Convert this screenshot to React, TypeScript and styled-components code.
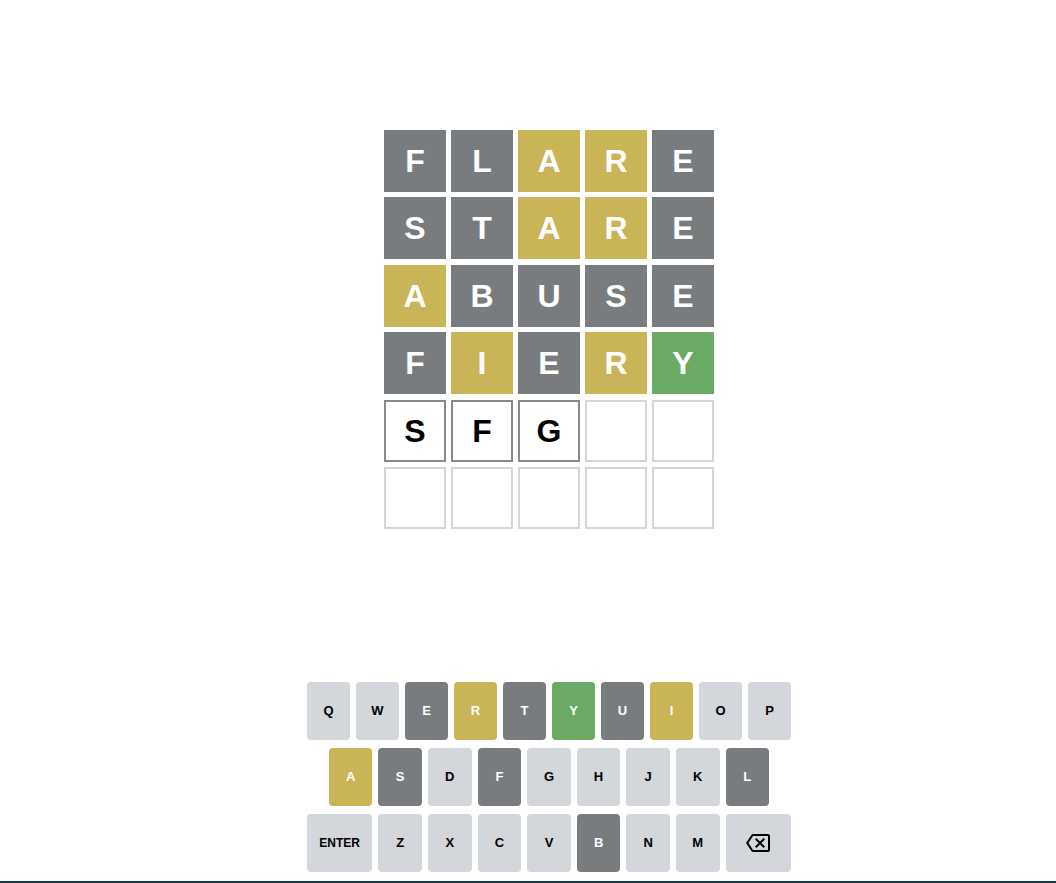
import React from "react";
import styled, { createGlobalStyle } from "styled-components";

const Global = createGlobalStyle`
  html, body { margin: 0; padding: 0; background: #ffffff; }
  body { font-family: "Liberation Sans", Arial, sans-serif; overflow: hidden; }
`;

type State = "absent" | "present" | "correct" | "filled" | "empty" | "unused";

const tileBg: Record<State, string> = {
  absent: "#787c7e",
  present: "#c9b458",
  correct: "#6aaa64",
  filled: "#ffffff",
  empty: "#ffffff",
  unused: "#d3d6da",
};

const Page = styled.div`
  box-sizing: border-box;
  height: 883px;
  padding-left: 42px;
  border-bottom: 2px solid #1f3440;
  display: flex;
  flex-direction: column;
  align-items: center;
`;

const Board = styled.div`
  margin-top: 130px;
  display: grid;
  grid-template-columns: repeat(5, 62px);
  grid-template-rows: repeat(6, 62px);
  column-gap: 5px;
  row-gap: 5.4px;
`;

const Tile = styled.div<{ $s: State }>`
  box-sizing: border-box;
  width: 62px;
  height: 62px;
  display: flex;
  align-items: center;
  justify-content: center;
  font-family: "Liberation Sans", Arial, sans-serif;
  font-weight: 700;
  font-size: 32px;
  line-height: 1;
  text-transform: uppercase;
  background: ${(p) => tileBg[p.$s]};
  color: ${(p) => (p.$s === "filled" || p.$s === "empty" ? "#000000" : "#ffffff")};
  border: ${(p) =>
    p.$s === "filled"
      ? "2px solid #878a8c"
      : p.$s === "empty"
      ? "2px solid #d3d6da"
      : "none"};
`;

const Keyboard = styled.div`
  margin-top: 153px;
  width: 490px;
  display: flex;
  flex-direction: column;
  gap: 8px;
`;

const KeyRow = styled.div`
  display: flex;
  width: 100%;
`;

const Spacer = styled.div`
  flex: 0.5;
`;

const Key = styled.button<{ $s: State; $wide?: boolean }>`
  flex: ${(p) => (p.$wide ? 1.5 : 1)};
  min-width: 0;
  height: 58px;
  margin: 0 3px;
  padding: 0;
  border: none;
  border-radius: 4px;
  display: flex;
  align-items: center;
  justify-content: center;
  font-family: "Liberation Sans", Arial, sans-serif;
  font-weight: 700;
  font-size: ${(p) => (p.$wide ? "12px" : "13px")};
  background: ${(p) => tileBg[p.$s]};
  color: ${(p) => (p.$s === "unused" ? "#000000" : "#ffffff")};
  cursor: pointer;
`;

const guesses: { letters: string; states: State[] }[] = [
  { letters: "FLARE", states: ["absent", "absent", "present", "present", "absent"] },
  { letters: "STARE", states: ["absent", "absent", "present", "present", "absent"] },
  { letters: "ABUSE", states: ["present", "absent", "absent", "absent", "absent"] },
  { letters: "FIERY", states: ["absent", "present", "absent", "present", "correct"] },
  { letters: "SFG  ", states: ["filled", "filled", "filled", "empty", "empty"] },
  { letters: "     ", states: ["empty", "empty", "empty", "empty", "empty"] },
];

const keyState: Record<string, State> = {
  E: "absent", R: "present", T: "absent", Y: "correct", U: "absent", I: "present",
  A: "present", S: "absent", F: "absent", L: "absent", B: "absent",
};

const ks = (k: string): State => keyState[k] ?? "unused";

const Backspace = () => (
  <svg width="24" height="24" viewBox="0 0 24 24" aria-hidden="true">
    <path
      fill="#000000"
      d="M22 3H7c-.69 0-1.23.35-1.59.88L0 12l5.41 8.11c.36.53.9.89 1.59.89h15c1.1 0 2-.9 2-2V5c0-1.1-.9-2-2-2zm0 16H7.07L2.4 12l4.66-7H22v14zm-11.59-2L14 13.41 17.59 17 19 15.59 15.41 12 19 8.41 17.59 7 14 10.59 10.41 7 9 8.41 12.59 12 9 15.59z"
    />
  </svg>
);

export default function App() {
  return (
    <>
      <Global />
      <Page>
        <Board>
          {guesses.map((g, r) =>
            g.states.map((s, c) => (
              <Tile key={`${r}-${c}`} $s={s}>
                {g.letters[c].trim()}
              </Tile>
            ))
          )}
        </Board>
        <Keyboard>
          <KeyRow>
            {"QWERTYUIOP".split("").map((k) => (
              <Key key={k} $s={ks(k)}>{k}</Key>
            ))}
          </KeyRow>
          <KeyRow>
            <Spacer />
            {"ASDFGHJKL".split("").map((k) => (
              <Key key={k} $s={ks(k)}>{k}</Key>
            ))}
            <Spacer />
          </KeyRow>
          <KeyRow>
            <Key $s="unused" $wide>ENTER</Key>
            {"ZXCVBNM".split("").map((k) => (
              <Key key={k} $s={ks(k)}>{k}</Key>
            ))}
            <Key $s="unused" $wide aria-label="backspace">
              <Backspace />
            </Key>
          </KeyRow>
        </Keyboard>
      </Page>
    </>
  );
}
